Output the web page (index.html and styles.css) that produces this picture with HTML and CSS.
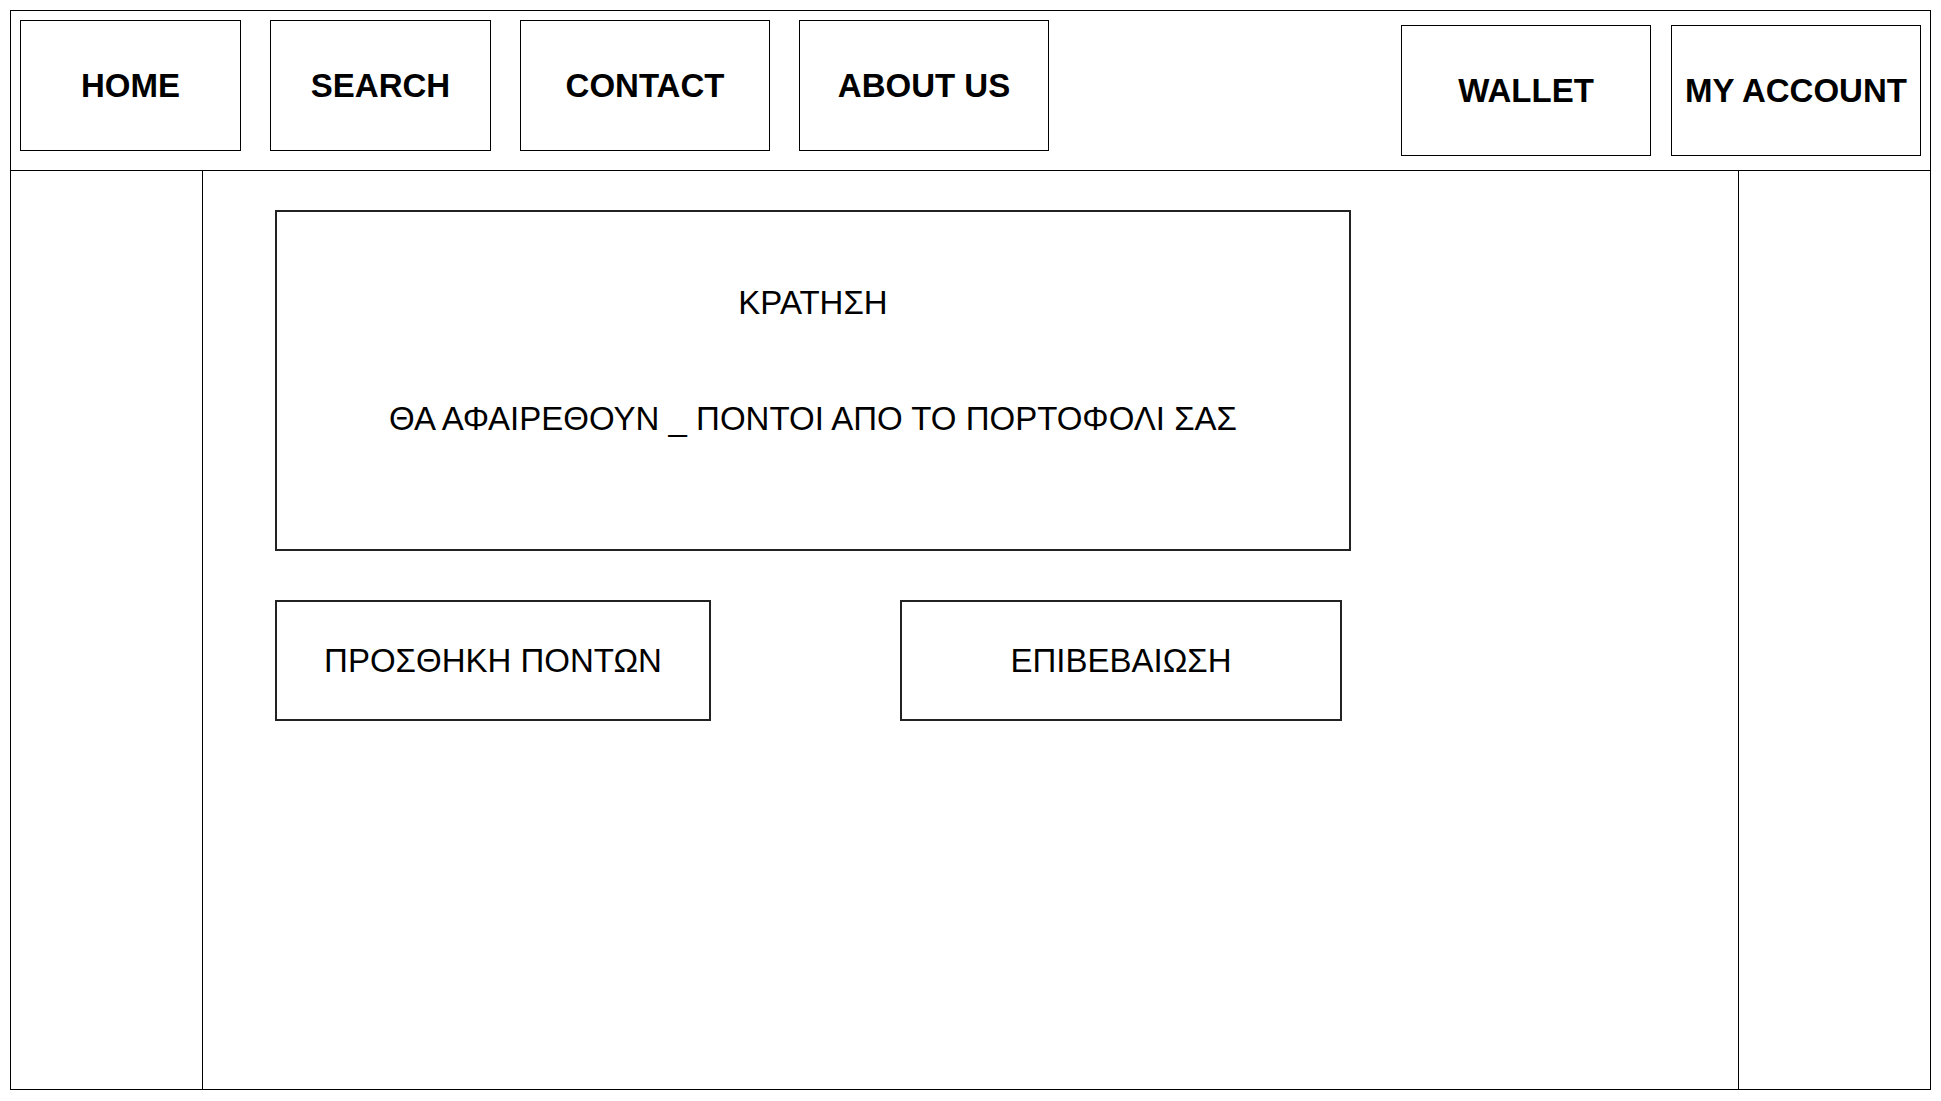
FILE: index.html
```html
<!DOCTYPE html>
<html lang="el">
<head>
<meta charset="utf-8">
<title>Κράτηση</title>
<link rel="stylesheet" href="styles.css">
</head>
<body>
<div class="frame">
  <header class="header">
    <nav class="nav-left">
      <a class="nav-box w220">HOME</a>
      <a class="nav-box w220">SEARCH</a>
      <a class="nav-box w250">CONTACT</a>
      <a class="nav-box w250">ABOUT US</a>
    </nav>
    <nav class="nav-right">
      <a class="nav-box w250">WALLET</a>
      <a class="nav-box w250">MY ACCOUNT</a>
    </nav>
  </header>
  <div class="body">
    <aside class="side side-left"></aside>
    <main class="main">
      <section class="booking">
        <p class="line">ΚΡΑΤΗΣΗ</p>
        <p class="line">ΘΑ ΑΦΑΙΡΕΘΟΥΝ _ ΠΟΝΤΟΙ ΑΠΟ ΤΟ ΠΟΡΤΟΦΟΛΙ ΣΑΣ</p>
      </section>
      <div class="actions">
        <button class="btn btn-add">ΠΡΟΣΘΗΚΗ ΠΟΝΤΩΝ</button>
        <button class="btn btn-confirm">ΕΠΙΒΕΒΑΙΩΣΗ</button>
      </div>
    </main>
    <aside class="side side-right"></aside>
  </div>
</div>
</body>
</html>
```

FILE: styles.css
```css
* { box-sizing: border-box; }

html, body { background: #fff; }

body {
  margin: 10px;
  font-family: "Liberation Sans", Arial, sans-serif;
  color: #000;
}

.frame {
  width: 1921px;
  height: 1080px;
  border: 1px solid #000;
  display: flex;
  flex-direction: column;
}

.header {
  height: 160px;
  flex: none;
  border-bottom: 1px solid #000;
  display: flex;
  justify-content: space-between;
  padding: 9px 9px 0 9px;
}

.nav-left {
  display: flex;
  gap: 29px;
  align-items: flex-start;
}

.nav-right {
  display: flex;
  gap: 20px;
  align-items: flex-start;
  padding-top: 5px;
}

.nav-box {
  height: 131px;
  border: 1px solid #000;
  display: flex;
  align-items: center;
  justify-content: center;
  font-weight: bold;
  font-size: 33px;
  color: #000;
  text-decoration: none;
  white-space: nowrap;
}

.w220 { width: 221px; }
.w250 { width: 250px; }

.body {
  flex: 1;
  display: flex;
}

.side {
  width: 192px;
  flex: none;
}

.side-left { border-right: 1px solid #000; }
.side-right { border-left: 1px solid #000; }

.main {
  flex: 1;
  padding: 39px 0 0 72px;
}

.booking {
  width: 1076px;
  height: 341px;
  border: 2px solid #222;
  display: flex;
  flex-direction: column;
  align-items: center;
  padding-top: 72px;
  gap: 78px;
}

.line {
  margin: 0;
  font-size: 33px;
  line-height: 38px;
}

.actions {
  margin-top: 49px;
  display: flex;
  gap: 189px;
}

.btn {
  height: 121px;
  border: 2px solid #222;
  background: #fff;
  font-family: "Liberation Sans", Arial, sans-serif;
  font-size: 33px;
  color: #000;
  padding: 0;
}

.btn-add { width: 436px; }
.btn-confirm { width: 442px; }
```
